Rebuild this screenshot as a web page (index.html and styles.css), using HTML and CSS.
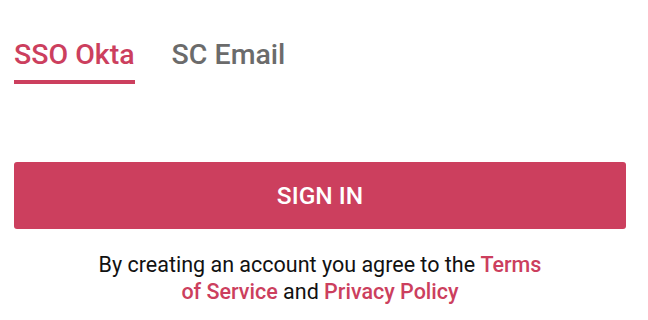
FILE: index.html
```html
<!DOCTYPE html>
<html>
<head>
  <title>Sign in</title>
  <link rel="stylesheet" href="styles.css">
</head>
<body>
  <div class="login">
    <div class="tabs">
      <div class="tab active">SSO Okta</div>
      <div class="tab">SC Email</div>
    </div>
    <button class="btn">SIGN IN</button>
    <p class="terms">
      By creating an account you agree to the <a href="#">Terms of Service</a> and <a href="#">Privacy Policy</a>
    </p>
  </div>
</body>
</html>
```

FILE: styles.css
```css
body {
  font-family: Roboto, "Noto Sans", sans-serif;
  background-color: #fff;
  margin: 0;
}
.login {
  padding: 38px 22px 0 14px;
}
.tabs {
  display: flex;
  gap: 37px;
}
.tab {
  font-size: 28.5px;
  line-height: 33px;
  font-weight: 500;
  color: #6b6b6b;
  padding-bottom: 9px;
  border-bottom: 4px solid transparent;
}
.tab.active {
  color: #cc3f5e;
  border-bottom-color: #cc3f5e;
}
.btn {
  display: block;
  width: 100%;
  height: 67px;
  margin-top: 78px;
  border: none;
  border-radius: 3px;
  background-color: #cc3f5e;
  color: white;
  font-family: Roboto, sans-serif;
  font-size: 24.5px;
  font-weight: 500;
  cursor: pointer;
}
.terms {
  max-width: 452px;
  margin: 22px auto 0;
  text-align: center;
  font-size: 21.5px;
  line-height: 27px;
  color: #111;
}
.terms a {
  color: #cc3f5e;
  font-weight: 500;
  text-decoration: none;
}
```
